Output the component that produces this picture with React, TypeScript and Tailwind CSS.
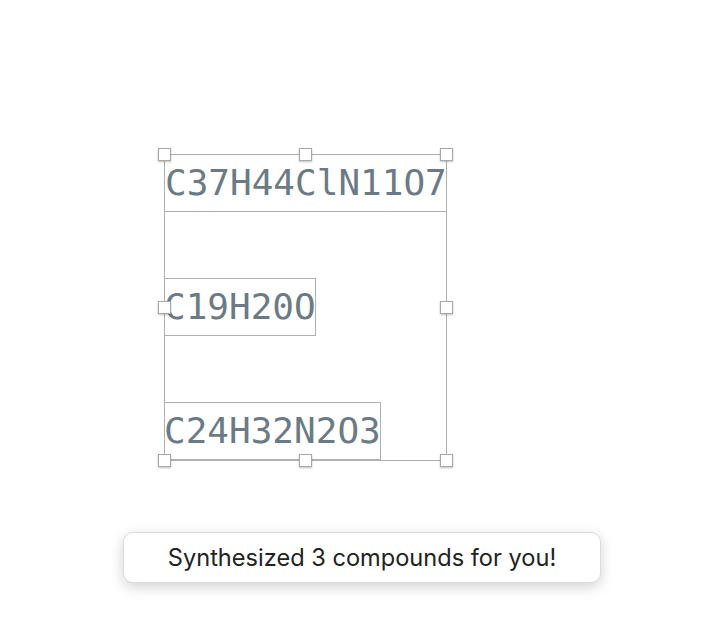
import React from "react";

const Handle = ({ className }: { className: string }) => (
  <div
    className={`absolute w-[13px] h-[13px] bg-white border border-[#a8a8a8] shadow-[0_1px_2px_rgba(0,0,0,0.25)] ${className}`}
  />
);

const Formula = ({ text }: { text: string }) => (
  <div className="self-start border border-[#b0b0b0] h-[58px] flex items-center">
    <span
      className="text-[36px] leading-none text-[#6b7a84] -mx-px"
      style={{ fontFamily: '"DejaVu Sans Mono", monospace' }}
    >
      {text}
    </span>
  </div>
);

export default function App() {
  return (
    <div className="w-[710px] h-[638px] bg-white overflow-hidden flex flex-col">
      <div className="ml-[164px] mt-[154px] w-[283px] h-[307px] relative border border-[#b0b0b0] flex flex-col">
        <div className="-m-px flex flex-col justify-between h-[306px]">
          <div className="self-stretch border border-[#b0b0b0] h-[58px] flex items-center">
            <span
              className="text-[36px] leading-none text-[#6b7a84]"
              style={{ fontFamily: '"DejaVu Sans Mono", monospace' }}
            >
              C37H44ClN11O7
            </span>
          </div>
          <Formula text="C19H20O" />
          <Formula text="C24H32N2O3" />
        </div>
        <Handle className="-left-[7px] -top-[7px]" />
        <Handle className="left-[134px] -top-[7px]" />
        <Handle className="-right-[7px] -top-[7px]" />
        <Handle className="-left-[7px] top-[146px]" />
        <Handle className="-right-[7px] top-[146px]" />
        <Handle className="-left-[7px] -bottom-[7px]" />
        <Handle className="left-[134px] -bottom-[7px]" />
        <Handle className="-right-[7px] -bottom-[7px]" />
      </div>
      <div className="ml-[123px] mt-[71px] w-[478px] h-[51px] rounded-[10px] bg-white border border-[#dcdcdc] shadow-[0_4px_14px_rgba(0,0,0,0.18)] flex items-center justify-center">
        <span
          className="text-[23.6px] text-[#222222]"
          style={{ fontFamily: '"Inter", "Liberation Sans", sans-serif' }}
        >
          Synthesized 3 compounds for you!
        </span>
      </div>
    </div>
  );
}
